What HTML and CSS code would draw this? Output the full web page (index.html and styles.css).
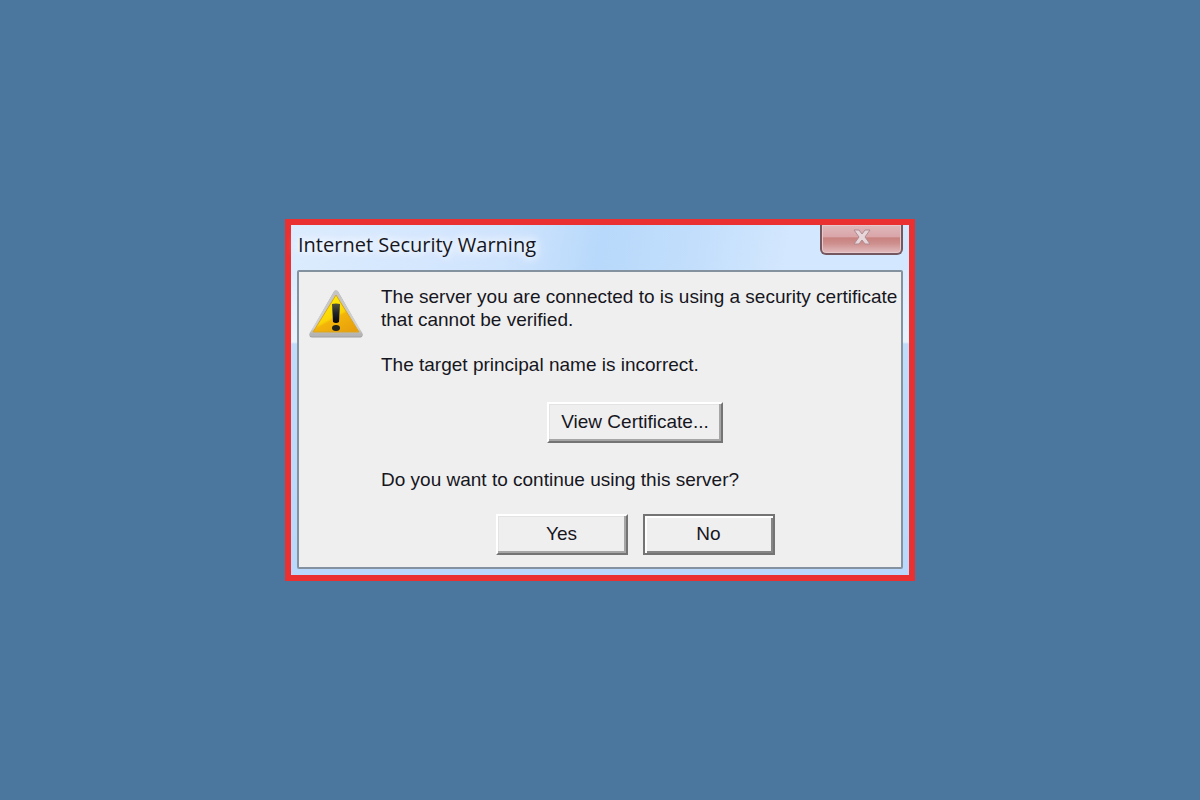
FILE: index.html
```
<!DOCTYPE html>
<html lang="en">
<head>
  <meta charset="UTF-8">
  <meta name="viewport" content="width=device-width, initial-scale=1.0">
  <title>Internet Security Warning</title>
  <link rel="stylesheet" href="styles.css">
</head>
<body>
  <div class="dialog" role="alertdialog" aria-labelledby="dialogTitle" aria-describedby="dialogText">
    <div class="title-bar">
      <h1 id="dialogTitle">Internet Security Warning</h1>
      <button class="close" aria-label="Close">
        <svg width="20" height="18" viewBox="0 0 20 18">
          <path d="M2 2h5l3 4 3-4h5l-5 7 5 7h-5l-3-4-3 4H2l5-7z" fill="#e6d6d9" stroke="#b08a90" stroke-width="1"/>
        </svg>
      </button>
    </div>

    <div class="panel">
      <svg class="icon" width="56" height="52" viewBox="0 0 56 52">
        <defs>
          <linearGradient id="edge" x1="0" y1="0" x2="0" y2="1">
            <stop offset="0" stop-color="#c4c4c4"/>
            <stop offset="0.85" stop-color="#d2d2d4"/>
            <stop offset="1" stop-color="#b4b4b4"/>
          </linearGradient>
          <linearGradient id="fill" x1="0.2" y1="0.1" x2="0.8" y2="1">
            <stop offset="0" stop-color="#fff000"/>
            <stop offset="0.5" stop-color="#fbd408"/>
            <stop offset="0.56" stop-color="#f3b40a"/>
            <stop offset="1" stop-color="#e8a00c"/>
          </linearGradient>
          <linearGradient id="mark" x1="0" y1="0" x2="0" y2="1">
            <stop offset="0" stop-color="#55553a"/>
            <stop offset="0.5" stop-color="#20242c"/>
            <stop offset="1" stop-color="#050608"/>
          </linearGradient>
        </defs>
        <path d="M27 4L51 46H3z" fill="#a0a0a0" stroke="#a0a0a0" stroke-width="5" stroke-linejoin="round"/>
        <path d="M27 4L51 45H3z" fill="url(#edge)" stroke="url(#edge)" stroke-width="5" stroke-linejoin="round"/>
        <path d="M27 6L50 43H4z" fill="url(#fill)" stroke="#d9a520" stroke-width="1" stroke-linejoin="round"/>
        <path d="M23 15q4-1 8 0l-1 18q-3 2-6 0z" fill="url(#mark)"/>
        <ellipse cx="27" cy="39" rx="4" ry="3" fill="#22221c"/>
      </svg>

      <div class="content">
        <p class="message" id="dialogText">The server you are connected to is using a security certificate that cannot be verified.</p>
        <p class="reason">The target principal name is incorrect.</p>
        <button class="btn view">View Certificate...</button>
        <p>Do you want to continue using this server?</p>
        <div class="actions">
          <button class="btn">Yes</button>
          <button class="btn default">No</button>
        </div>
      </div>
    </div>
  </div>
</body>
</html>
```
FILE: styles.css
```
* {
  box-sizing: border-box;
}
body {
  margin: 0;
  min-height: 100vh;
  display: flex;
  align-items: center;
  justify-content: center;
  background: #4b779f;
  color: #16161e;
  font-family: "Liberation Sans", Arial, sans-serif;
  font-size: 19px;
  line-height: 23px;
}
.dialog {
  width: 100%;
  max-width: 630px;
  padding: 0 6px 6px;
  border: 6px solid #ea3030;
  background: linear-gradient(#d3e7fe 0, #e8f2fd 117px, #c0dcfb 119px, #b9d8fb 100%);
}
.title-bar {
  display: flex;
  justify-content: space-between;
  align-items: flex-start;
  height: 45px;
  margin: 0 -6px;
  padding: 0 6px;
  background: linear-gradient(100deg, #dcecfe 0, #cfe4fd 35%, #b8d9fb 50%, #c2defc 65%, #d3e7fe 80%);
}
h1 {
  margin: 0;
  padding: 8px 1px;
  font-family: "Open Sans", "Noto Sans", sans-serif;
  font-size: 20px;
  font-weight: normal;
  line-height: 23px;
  text-shadow: 0 0 8px #fff, 0 0 12px #fff, 0 0 16px #fff;
}
.close {
  width: 83px;
  height: 30px;
  padding: 0 0 4px;
  border: 2px solid #75575f;
  border-top: 0;
  border-radius: 0 0 6px 6px;
  background: linear-gradient(#dfb9bd 0, #d9a5a8 42%, #c8827f 46%, #cd8e8c 65%, #e2bcbf 100%);
  box-shadow: inset 0 0 0 1px #e6c9cd;
}
.close svg {
  display: block;
  margin: 0 auto;
}
.panel {
  display: flex;
  align-items: flex-start;
  gap: 16px;
  padding: 13px 12px 12px 10px;
  border: 2px solid #8492a0;
  border-radius: 2px;
  background: #efefef;
}
.icon {
  flex: none;
  margin-top: 4px;
}
.content {
  flex: 1;
  display: flex;
  flex-direction: column;
}
p {
  margin: 0;
}
/* the message may run closer to the edge than the buttons */
.message {
  margin-right: -10px;
}
.reason {
  margin-top: 22px;
}
.btn {
  width: 132px;
  height: 41px;
  padding: 0 0 2px;
  border: 2px solid;
  border-color: #fff #747474 #747474 #fff;
  background: #efefef;
  box-shadow: inset -2px -2px #a6a6a6, inset 1px 1px #e3e3e3;
  color: inherit;
  font: inherit;
}
.view {
  align-self: center;
  width: 176px;
  margin: 26px 0 25px;
}
.default {
  border-color: #747474;
  box-shadow: inset 2px 2px #fff, inset -2px -2px #858585;
}
.actions {
  display: flex;
  justify-content: center;
  gap: 15px;
  margin-top: 23px;
}
```
